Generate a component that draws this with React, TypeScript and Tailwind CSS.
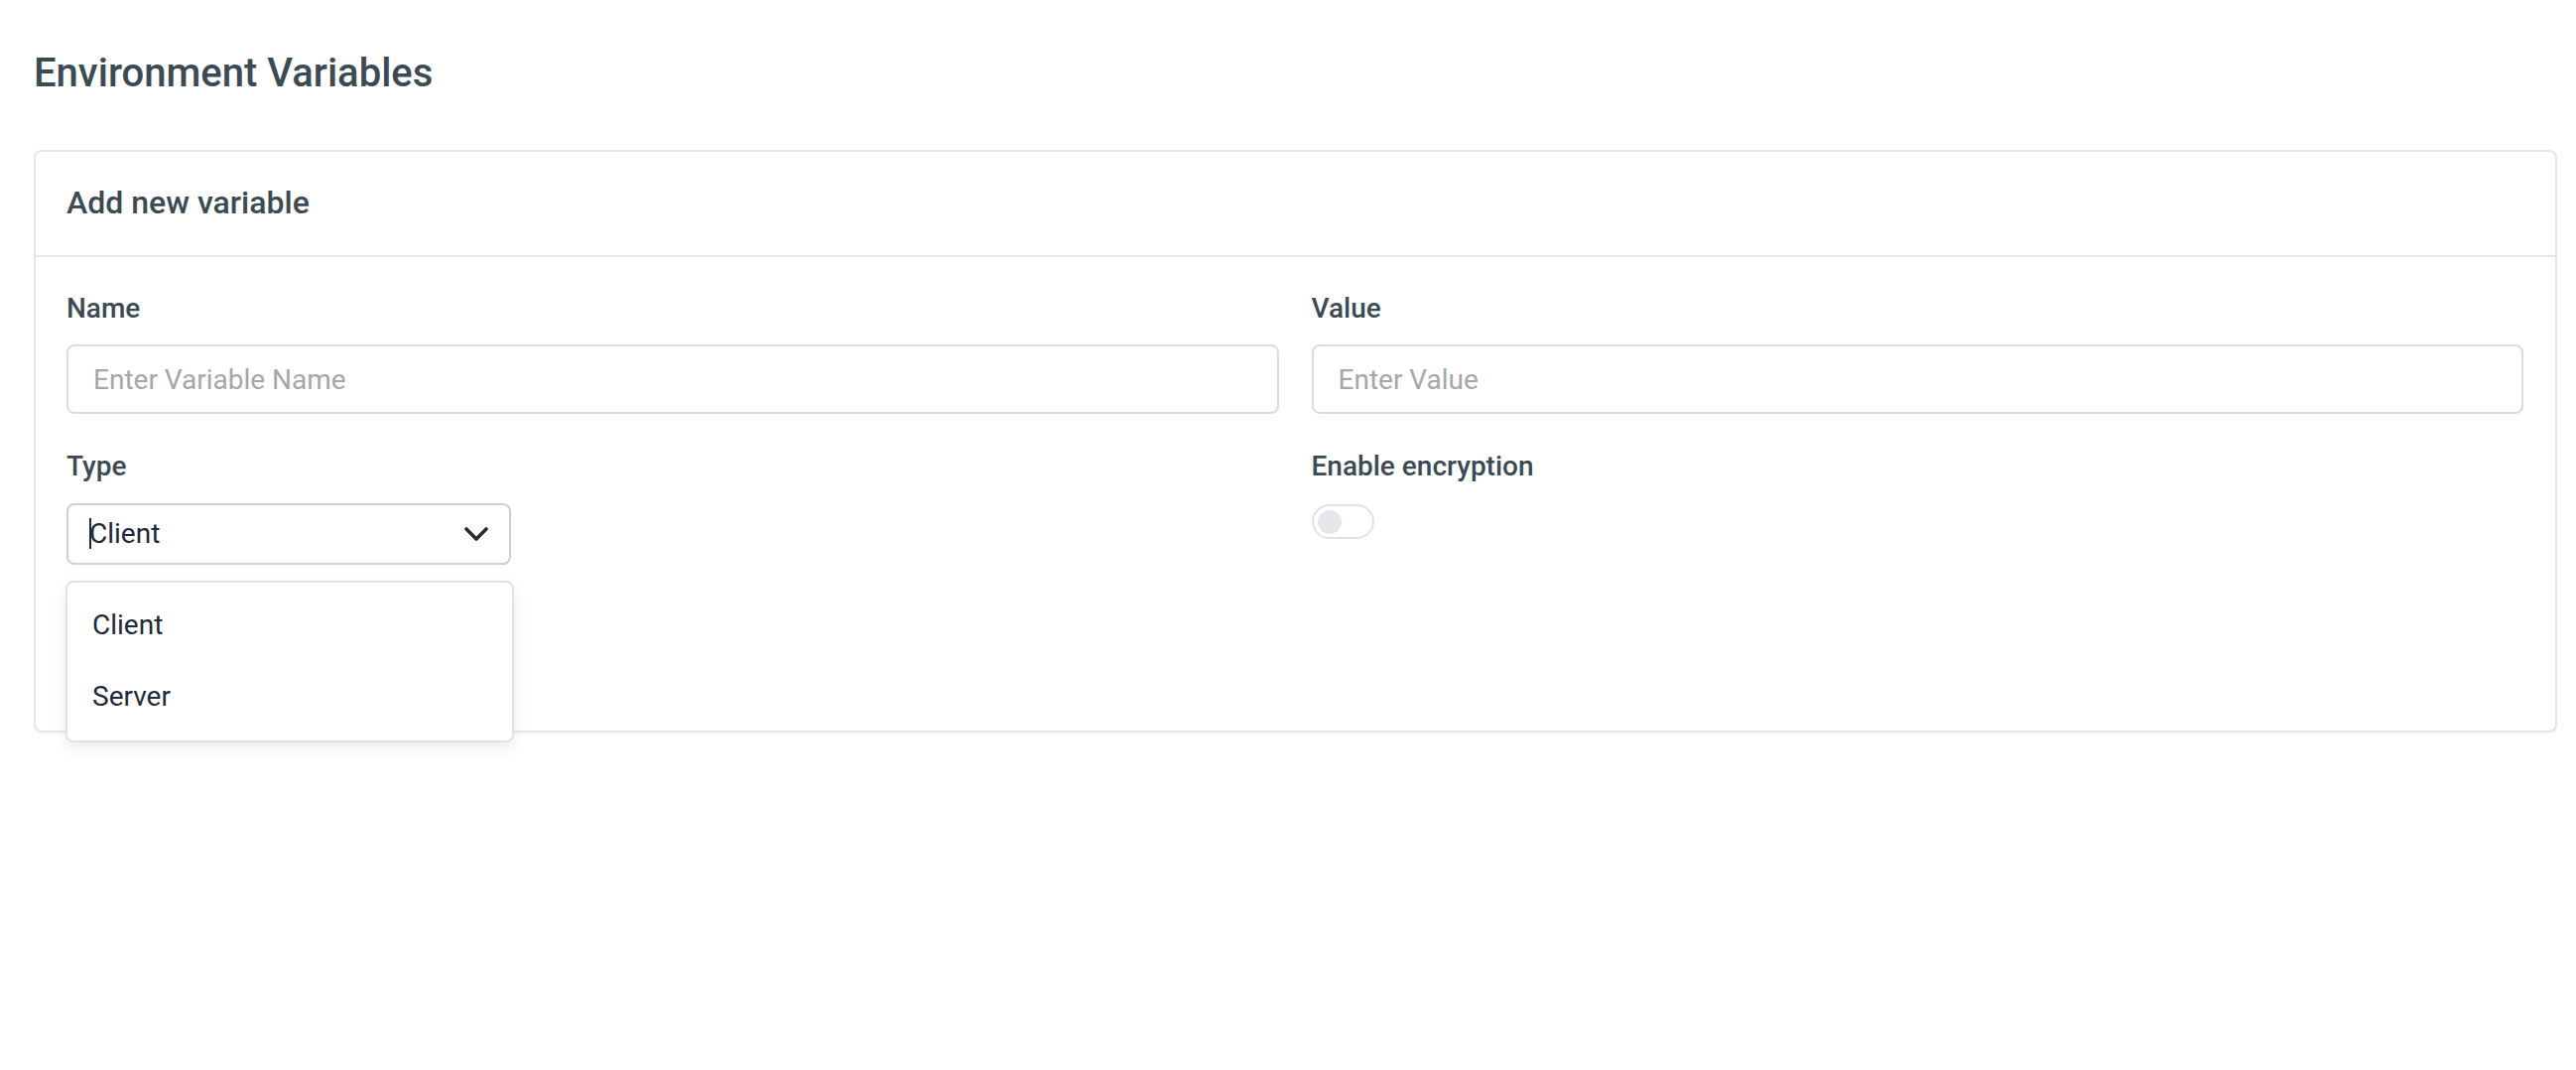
import React from "react";

function Chevron() {
  return (
    <svg width="26" height="16" viewBox="0 0 26 16" className="shrink-0">
      <polyline points="3,3 13,13 23,3" fill="none" stroke="#2b2b2b" strokeWidth="3.6" strokeLinecap="round" strokeLinejoin="round" />
    </svg>
  );
}

export default function App() {
  return (
    <div className="min-h-[1078px] w-full bg-white pl-[34px] pr-[19px] pt-[50px] font-['Roboto',sans-serif]">
      <h1 className="text-[40px] leading-[48px] font-medium text-[#3c4a54]">Environment Variables</h1>
      <div className="mt-[53px] rounded-[8px] border-2 border-[#e6e6e6] bg-white shadow-[0_2px_3px_rgba(0,0,0,0.03)]">
        <div className="border-b-2 border-[#e6e6e6] pl-[31px] pt-[32px] pb-[34px]">
          <h2 className="text-[32px] leading-[38px] font-medium text-[#3c4a54]">Add new variable</h2>
        </div>
        <div className="grid grid-cols-2 gap-x-[33px] pl-[31px] pr-[32px] pt-[36px] pb-[167px]">
          <div className="flex flex-col">
            <label className="text-[28px] leading-[32px] font-medium text-[#3c4a54]">Name</label>
            <input
              className="mt-[20px] h-[70px] rounded-[8px] border-2 border-[#dcdcdc] px-[25px] text-[28px] text-[#1f2937] outline-none placeholder:text-[#a3a7ad]"
              placeholder="Enter Variable Name"
            />
            <label className="mt-[37px] text-[28px] leading-[32px] font-medium text-[#3c4a54]">Type</label>
            <div className="relative mt-[21px] w-[448px]">
              <div className="flex h-[62px] items-center justify-between rounded-[8px] border-2 border-[#cfcfcf] pl-[21px] pr-[20px]">
                <span className="relative text-[28px] leading-[34px] text-[#1f2937]">
                  <span className="absolute left-0 top-[1px] h-[31px] w-[2px] bg-[#1f2937]" />
                  Client
                </span>
                <Chevron />
              </div>
              <div className="absolute left-[-1px] top-[78px] z-10 w-[452px] rounded-[8px] border-2 border-[#e2e2e2] bg-white pt-[6px] pb-[8px] shadow-[0_6px_16px_rgba(0,0,0,0.08)]">
                <div className="flex h-[73px] items-center pl-[25px] text-[28px] text-[#1f2937]">Client</div>
                <div className="flex h-[72px] items-center pl-[25px] text-[28px] text-[#1f2937]">Server</div>
              </div>
            </div>
          </div>
          <div className="flex flex-col">
            <label className="text-[28px] leading-[32px] font-medium text-[#3c4a54]">Value</label>
            <input
              className="mt-[20px] h-[70px] rounded-[8px] border-2 border-[#dcdcdc] px-[25px] text-[28px] text-[#1f2937] outline-none placeholder:text-[#a3a7ad]"
              placeholder="Enter Value"
            />
            <label className="mt-[37px] text-[28px] leading-[32px] font-medium text-[#3c4a54]">Enable encryption</label>
            <div className="mt-[22px] flex h-[35px] w-[63px] items-center rounded-full border-2 border-[#e2e2e2] bg-white pl-[4px]">
              <div className="h-[24px] w-[24px] rounded-full bg-[#e5e7eb]" />
            </div>
          </div>
        </div>
      </div>
    </div>
  );
}
